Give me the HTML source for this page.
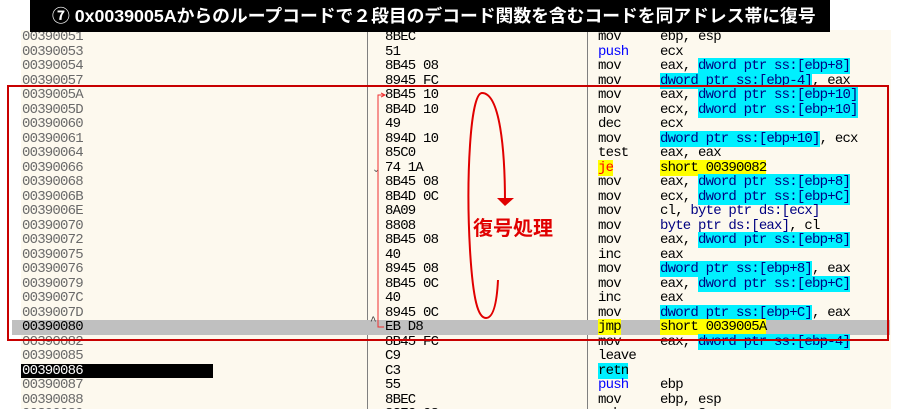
<!DOCTYPE html>
<html><head><meta charset="utf-8"><style>
html,body{margin:0;width:900px;height:409px;overflow:hidden}
body{background:#fff;position:relative;font-family:"Liberation Mono",monospace}
#bg{position:absolute;left:21px;top:30px;width:870px;height:379px;background:#fdf9ee}
.d{position:absolute;top:30px;width:1px;height:379px;background:#808080}
.r{position:absolute;left:0;width:900px;height:14.5px;font-size:14px;letter-spacing:-0.8px;line-height:14.5px;white-space:pre}
.r span{position:absolute;top:0}
.a{left:22px;color:#6a6a6a}
.b{left:385px;color:#000}
.m{left:598px;color:#000}
.o{left:660px;color:#000}
.c{background:#00f0ff;color:#000080}
.bl{color:#000080}
.y{background:#ffff00}
#title{position:absolute;left:30px;top:0;width:800px;height:32px;background:#000;color:#fff;font:bold 17.8px "Liberation Sans","Noto Sans CJK JP",sans-serif;line-height:32px;padding-left:22px;box-sizing:border-box;white-space:nowrap}
</style></head><body>
<div id="bg"></div>
<div class="d" style="left:367px"></div>
<div class="d" style="left:587px"></div>
<div id="rows"></div>
<script>
var R=[
["00390051","8BEC","mov","ebp, esp"],
["00390053","51","<span style='position:static;color:#0000ff'>push</span>","ecx"],
["00390054","8B45 08","mov","eax, <c>dword ptr ss:[ebp+8]</c>"],
["00390057","8945 FC","mov","<c>dword ptr ss:[ebp-4]</c>, eax"],
["0039005A","8B45 10","mov","eax, <c>dword ptr ss:[ebp+10]</c>"],
["0039005D","8B4D 10","mov","ecx, <c>dword ptr ss:[ebp+10]</c>"],
["00390060","49","dec","ecx"],
["00390061","894D 10","mov","<c>dword ptr ss:[ebp+10]</c>, ecx"],
["00390064","85C0","test","eax, eax"],
["00390066","74 1A","<y style='color:#f00'>je</y>","<y>short 00390082</y>"],
["00390068","8B45 08","mov","eax, <c>dword ptr ss:[ebp+8]</c>"],
["0039006B","8B4D 0C","mov","ecx, <c>dword ptr ss:[ebp+C]</c>"],
["0039006E","8A09","mov","cl, <b>byte ptr ds:[ecx]</b>"],
["00390070","8808","mov","<b>byte ptr ds:[eax]</b>, cl"],
["00390072","8B45 08","mov","eax, <c>dword ptr ss:[ebp+8]</c>"],
["00390075","40","inc","eax"],
["00390076","8945 08","mov","<c>dword ptr ss:[ebp+8]</c>, eax"],
["00390079","8B45 0C","mov","eax, <c>dword ptr ss:[ebp+C]</c>"],
["0039007C","40","inc","eax"],
["0039007D","8945 0C","mov","<c>dword ptr ss:[ebp+C]</c>, eax"],
["00390080","EB D8","<y>jmp</y>","<y>short 0039005A</y>"],
["00390082","8B45 FC","mov","eax, <c>dword ptr ss:[ebp-4]</c>"],
["00390085","C9","leave",""],
["00390086","C3","<c style='color:#000'>retn</c>",""],
["00390087","55","<span style='position:static;color:#0000ff'>push</span>","ebp"],
["00390088","8BEC","mov","ebp, esp"],
["00390089","83EC 08","sub","esp, 8"]];
var h="";
R.forEach(function(r,i){
 var t=30+14.5*i, st="top:"+t+"px;";
 var bgs="";
 if(i==20)bgs+="<div style='position:absolute;left:12px;top:"+t+"px;width:878px;height:14.5px;background:#c0c0c0'></div>";
 if(i==23)bgs+="<div style='position:absolute;left:21px;top:"+t+"px;width:192px;height:14.5px;background:#000'></div>";
 var ac=(i==20)?"color:#000":(i==23?"color:#fff":"");
 var f=function(s){return s.replace(/<c( style='[^']*')?>/g,function(m,a){return "<i class='c' style='font-style:normal;position:static;"+(a?a.slice(8,-1):"")+"'>"}).replace(/<\/c>/g,"</i>").replace(/<y( style='[^']*')?>/g,function(m,a){return "<i class='y' style='font-style:normal;position:static;"+(a?a.slice(8,-1):"")+"'>"}).replace(/<\/y>/g,"</i>").replace(/<b>/g,"<i class='bl' style='font-style:normal;position:static'>").replace(/<\/b>/g,"</i>")};
 h+=bgs+"<div class='r' style='"+st+"'><span class='a' style='"+ac+"'>"+r[0]+"</span><span class='b'>"+r[1]+"</span><span class='m'>"+f(r[2])+"</span><span class='o'>"+f(r[3])+"</span></div>";
});
document.getElementById("rows").innerHTML=h;
</script>
<div style="position:absolute;left:372px;top:164px;font-size:10px;color:#555">⌄</div>
<div style="position:absolute;left:370px;top:316px;font-size:11px;color:#333">^</div>
<svg style="position:absolute;left:0;top:0" width="900" height="409">
<path d="M384 95 H378 V327 H384" fill="none" stroke="#f03030" stroke-width="1"/>
<path d="M381 93 L385 95 L381 97" fill="none" stroke="#f03030"/>
<rect x="8" y="86" width="880" height="254" fill="none" stroke="#c80000" stroke-width="2"/>
<path d="M505 203 C 505 150, 500 93, 482 93 C 470 93, 466 180, 470 250 C 473 300, 478 318, 486 318 C 494 318, 497 300, 498 280" fill="none" stroke="#e00000" stroke-width="2"/>
<path d="M497 198 L505 206 L514 198 Z" fill="#e00000"/>
<text x="473" y="235" font-family="Liberation Sans,Noto Sans CJK JP,sans-serif" font-weight="bold" font-size="20" fill="#e00000">復号処理</text>
</svg>
<div id="title">⑦ 0x0039005Aからのループコードで２段目のデコード関数を含むコードを同アドレス帯に復号</div>
</body></html>
